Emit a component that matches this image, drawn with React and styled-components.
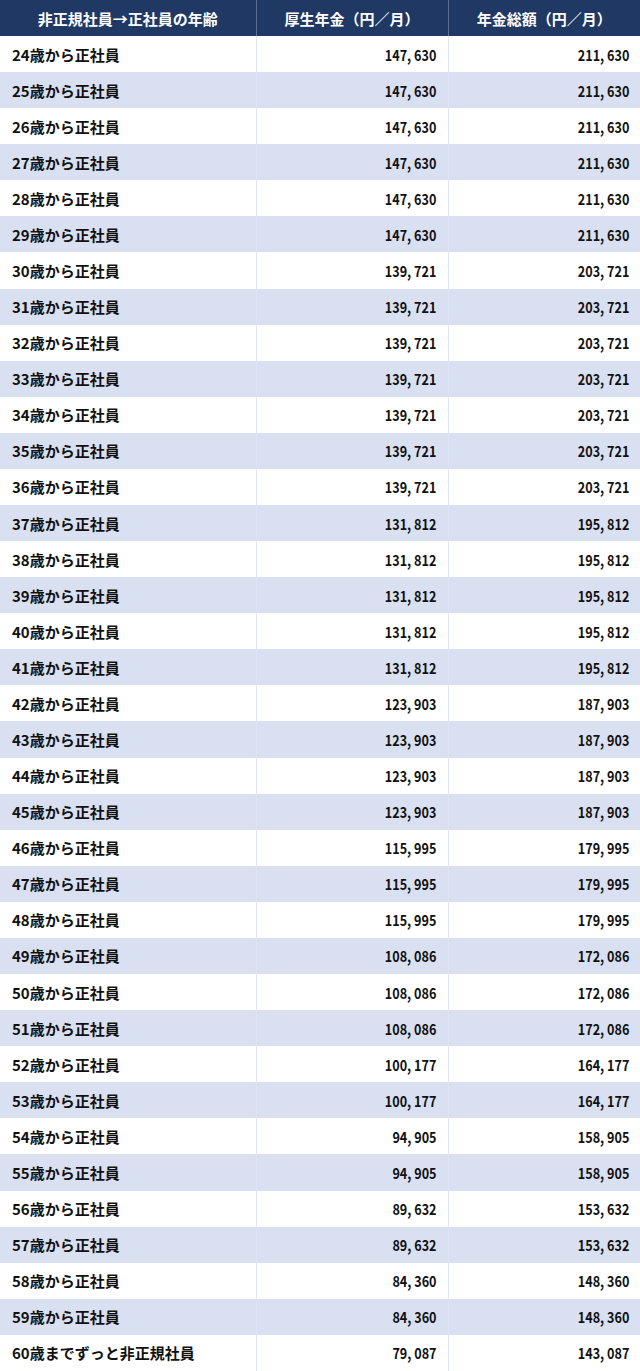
import React from "react";
import styled, { createGlobalStyle } from "styled-components";

const GlobalStyle = createGlobalStyle`
  html, body {
    margin: 0;
    padding: 0;
    background: #ffffff;
  }
  body {
    font-family: "Noto Sans CJK JP", "Noto Sans", sans-serif;
  }
`;

const rows = [
  ["24歳から正社員", "147,630", "211,630"],
  ["25歳から正社員", "147,630", "211,630"],
  ["26歳から正社員", "147,630", "211,630"],
  ["27歳から正社員", "147,630", "211,630"],
  ["28歳から正社員", "147,630", "211,630"],
  ["29歳から正社員", "147,630", "211,630"],
  ["30歳から正社員", "139,721", "203,721"],
  ["31歳から正社員", "139,721", "203,721"],
  ["32歳から正社員", "139,721", "203,721"],
  ["33歳から正社員", "139,721", "203,721"],
  ["34歳から正社員", "139,721", "203,721"],
  ["35歳から正社員", "139,721", "203,721"],
  ["36歳から正社員", "139,721", "203,721"],
  ["37歳から正社員", "131,812", "195,812"],
  ["38歳から正社員", "131,812", "195,812"],
  ["39歳から正社員", "131,812", "195,812"],
  ["40歳から正社員", "131,812", "195,812"],
  ["41歳から正社員", "131,812", "195,812"],
  ["42歳から正社員", "123,903", "187,903"],
  ["43歳から正社員", "123,903", "187,903"],
  ["44歳から正社員", "123,903", "187,903"],
  ["45歳から正社員", "123,903", "187,903"],
  ["46歳から正社員", "115,995", "179,995"],
  ["47歳から正社員", "115,995", "179,995"],
  ["48歳から正社員", "115,995", "179,995"],
  ["49歳から正社員", "108,086", "172,086"],
  ["50歳から正社員", "108,086", "172,086"],
  ["51歳から正社員", "108,086", "172,086"],
  ["52歳から正社員", "100,177", "164,177"],
  ["53歳から正社員", "100,177", "164,177"],
  ["54歳から正社員", "94,905", "158,905"],
  ["55歳から正社員", "94,905", "158,905"],
  ["56歳から正社員", "89,632", "153,632"],
  ["57歳から正社員", "89,632", "153,632"],
  ["58歳から正社員", "84,360", "148,360"],
  ["59歳から正社員", "84,360", "148,360"],
  ["60歳までずっと非正規社員", "79,087", "143,087"],
];

const Table = styled.table`
  width: 640px;
  border-collapse: collapse;
  table-layout: fixed;
  font-size: 15px;
  font-weight: 700;
  color: #111111;
`;

const HeadCell = styled.th`
  height: 36px;
  padding: 0;
  background: #203864;
  color: #ffffff;
  font-weight: 700;
  text-align: center;
  border-left: 1px solid #5d6f94;
  &:first-child {
    border-left: none;
  }
`;

const Row = styled.tr`
  height: 36.08px;
  background: ${({ $striped }) => ($striped ? "#d9e0f1" : "#ffffff")};
`;

const Cell = styled.td`
  padding: 0 ${({ $num }) => ($num ? "11px" : "12px")};
  text-align: ${({ $num }) => ($num ? "right" : "left")};
  border-left: 1px solid #dfe5f2;
  white-space: nowrap;
  &:first-child {
    border-left: none;
  }
`;

const Num = styled.span`
  display: inline-block;
  transform: scaleX(0.84);
  transform-origin: right center;
`;

export default function App() {
  return (
    <>
      <GlobalStyle />
      <Table>
        <colgroup>
          <col style={{ width: 256 }} />
          <col style={{ width: 192 }} />
          <col style={{ width: 192 }} />
        </colgroup>
        <thead>
          <tr>
            <HeadCell>非正規社員→正社員の年齢</HeadCell>
            <HeadCell>厚生年金（円／月）</HeadCell>
            <HeadCell>年金総額（円／月）</HeadCell>
          </tr>
        </thead>
        <tbody>
          {rows.map(([age, pension, total], i) => (
            <Row key={age} $striped={i % 2 === 1}>
              <Cell>{age}</Cell>
              <Cell $num>
                <Num>{pension.replace(",", ", ")}</Num>
              </Cell>
              <Cell $num>
                <Num>{total.replace(",", ", ")}</Num>
              </Cell>
            </Row>
          ))}
        </tbody>
      </Table>
    </>
  );
}
